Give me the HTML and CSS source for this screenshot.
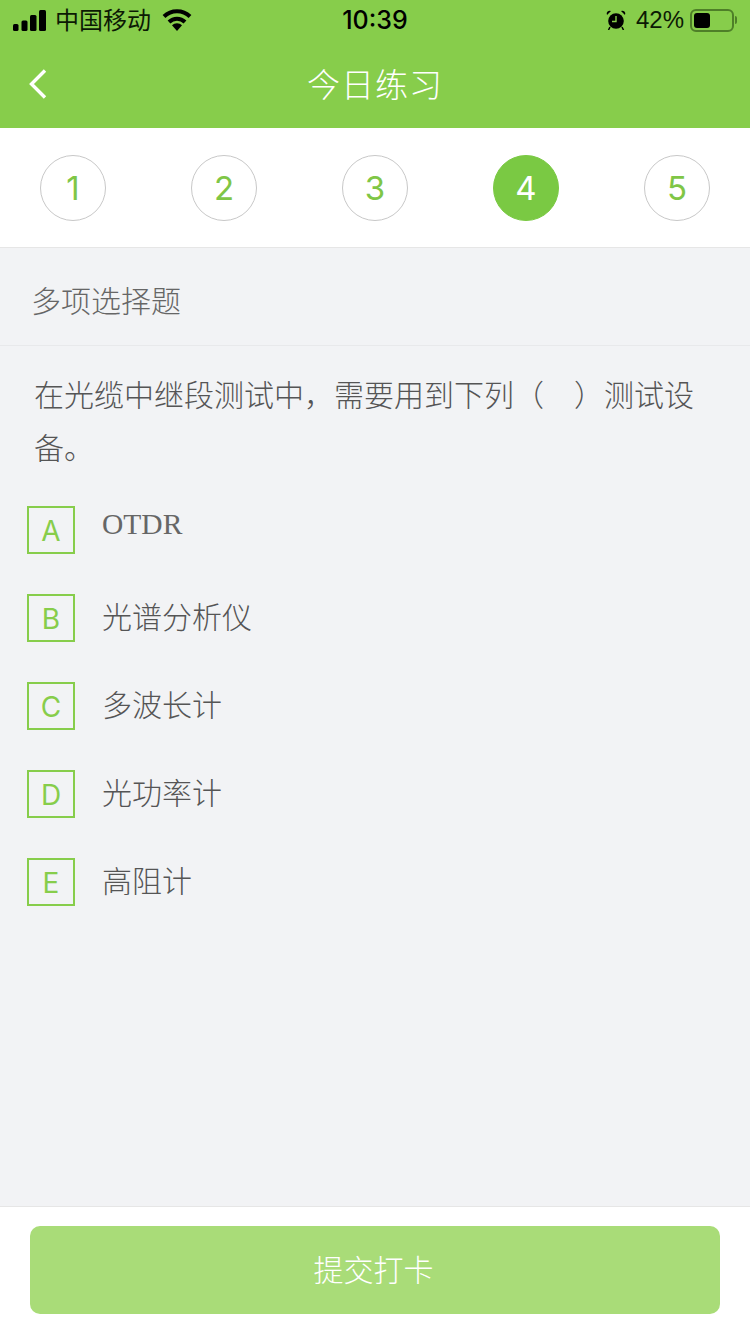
FILE: index.html
```html
<!DOCTYPE html>
<html lang="zh-CN">

<head>
    <meta charset="UTF-8">
    <meta name="viewport" content="width=device-width, initial-scale=1.0">
    <title>今日练习</title>

    <link rel="stylesheet" href="styles.css">
</head>

<body>

    <div id="app">

        <!-- Green header with status bar -->
        <div class="header">
            <div class="status-bar">
                <div class="status-left">
                    <svg class="signal" width="33" height="21" viewBox="0 0 33 21">
                        <rect x="0" y="14" width="5.5" height="7" rx="1.5" fill="#000"/>
                        <rect x="8.5" y="10.5" width="6" height="10.5" rx="1.5" fill="#000"/>
                        <rect x="17" y="5" width="6.5" height="16" rx="1.5" fill="#000"/>
                        <rect x="26" y="0" width="7" height="21" rx="1.5" fill="#000"/>
                    </svg>
                    <span class="carrier">中国移动</span>
                    <svg class="wifi" width="30" height="22" viewBox="0 0 30 22">
                        <path d="M2 7.5 A18.5 18.5 0 0 1 28 7.5" fill="none" stroke="#000" stroke-width="4"/>
                        <path d="M7 13 A11.5 11.5 0 0 1 23 13" fill="none" stroke="#000" stroke-width="4"/>
                        <path d="M15 22 L10 16.3 A7 7 0 0 1 20 16.3 Z" fill="#000"/>
                    </svg>
                </div>
                <span class="clock">10:39</span>
                <div class="status-right">
                    <svg class="alarm" width="20" height="20" viewBox="0 0 20 20">
                        <circle cx="10" cy="11" r="7.8" fill="#000"/>
                        <path d="M1 5 L5 1 A3 3 0 0 0 1 5 Z M19 5 L15 1 A3 3 0 0 1 19 5 Z" fill="#000"/>
                        <path d="M10 6 V11.5 H6" fill="none" stroke="#87cd4b" stroke-width="1.4"/>
                        <path d="M4 17 L2.5 20 M16 17 L17.5 20" stroke="#000" stroke-width="1.5"/>
                    </svg>
                    <span class="battery-pct">42%</span>
                    <div class="battery">
                        <div class="battery-level"></div>
                    </div>
                    <div class="battery-cap"></div>
                </div>
            </div>
            <div class="nav-bar">
                <svg class="back" width="22" height="32" viewBox="0 0 22 32">
                    <path d="M18 2.5 L4.5 16 L18 29.5" fill="none" stroke="#fff" stroke-width="3.4"/>
                </svg>
                <h1>今日练习</h1>
            </div>
        </div>

        <!-- Question numbers -->
        <div class="steps">
            <span class="step">1</span>
            <span class="step">2</span>
            <span class="step">3</span>
            <span class="step active">4</span>
            <span class="step">5</span>
        </div>

        <div class="main">
            <div class="question-type">多项选择题</div>
            <p class="question">在光缆中继段测试中，需要用到下列（　）测试设备。</p>

            <div class="options">
                <div class="option">
                    <span class="letter">A</span>
                    <span class="option-text latin">OTDR</span>
                </div>
                <div class="option">
                    <span class="letter">B</span>
                    <span class="option-text">光谱分析仪</span>
                </div>
                <div class="option">
                    <span class="letter">C</span>
                    <span class="option-text">多波长计</span>
                </div>
                <div class="option">
                    <span class="letter">D</span>
                    <span class="option-text">光功率计</span>
                </div>
                <div class="option">
                    <span class="letter">E</span>
                    <span class="option-text">高阻计</span>
                </div>
            </div>
        </div>

        <div class="footer">
            <button type="button" class="submit-btn">提交打卡</button>
        </div>
    </div>

</body>

</html>
```

FILE: styles.css
```css
* {
    box-sizing: border-box;
}

html,
body {
    margin: 0;
    padding: 0;
}

body {
    font-family: "Liberation Sans", "Noto Sans CJK SC", sans-serif;
    background-color: #f2f3f5;
}

#app {
    display: flex;
    flex-direction: column;
    width: 750px;
    height: 1334px;
    overflow: hidden;
}

.header {
    height: 128px;
    background-color: #87cd4b;
}

.status-bar {
    display: flex;
    justify-content: space-between;
    align-items: center;
    height: 40px;
    padding: 0 13px 0 13px;
    color: #000;
    position: relative;
}

.status-left,
.status-right {
    display: flex;
    align-items: center;
}

.carrier {
    margin-left: 9px;
    margin-top: -3px;
    font-size: 24px;
    color: #0c1a04;
}

.wifi {
    margin-left: 11px;
}

.clock {
    position: absolute;
    left: 0;
    right: 0;
    text-align: center;
    font-family: Inter, sans-serif;
    font-size: 25px;
    font-weight: 500;
}

.battery-pct {
    margin-left: 10px;
    font-size: 24px;
    color: #0c1a04;
}

.battery {
    width: 44px;
    height: 23px;
    margin-left: 6px;
    padding: 2px;
    border: 2px solid #4e7f28;
    border-radius: 6px;
}

.battery-level {
    width: 16px;
    height: 15px;
    background-color: #000;
    border-radius: 3px;
}

.battery-cap {
    width: 2px;
    height: 8px;
    margin-left: 1px;
    background-color: #4e7f28;
    border-radius: 0 2px 2px 0;
}

.nav-bar {
    display: flex;
    justify-content: center;
    align-items: center;
    height: 88px;
    padding-bottom: 2px;
    position: relative;
}

.back {
    position: absolute;
    left: 27px;
    top: 28px;
}

.nav-bar h1 {
    margin: 0;
    font-size: 33px;
    font-weight: 300;
    color: #fff;
    letter-spacing: 1px;
}

.steps {
    display: flex;
    justify-content: space-between;
    align-items: center;
    height: 120px;
    padding: 0 40px 0 40px;
    background-color: #fff;
    border-bottom: 1px solid #e6e6e6;
}

.step {
    display: flex;
    justify-content: center;
    align-items: center;
    width: 66px;
    height: 66px;
    border: 1px solid #c8c8c8;
    border-radius: 50%;
    font-family: Inter, sans-serif;
    font-size: 33px;
    font-weight: 400;
    color: #7fc646;
}

.step.active {
    background-color: #7ac943;
    border-color: #7ac943;
    color: #fff;
}

.main {
    flex: 1;
}

.question-type {
    height: 98px;
    padding: 36px 0 0 31px;
    border-bottom: 1px solid #e8e9eb;
    font-size: 30px;
    font-weight: 300;
    line-height: 36px;
    color: #666;
}

.question {
    margin: 0;
    padding: 23px 30px 0 34px;
    font-size: 30px;
    font-weight: 300;
    line-height: 53px;
    color: #555;
}

.options {
    margin-top: 31px;
    padding-left: 27px;
}

.option {
    display: flex;
    height: 88px;
}

.letter {
    display: flex;
    justify-content: center;
    align-items: center;
    width: 48px;
    height: 48px;
    padding-top: 2px;
    border: 2px solid #87cd4b;
    font-family: Inter, sans-serif;
    font-size: 28px;
    font-weight: 400;
    color: #87cd4b;
}

.option-text {
    margin-left: 27px;
    font-size: 30px;
    font-weight: 300;
    line-height: 48px;
    color: #555;
}

.option-text.latin {
    font-family: "Liberation Serif", serif;
    font-weight: 400;
    font-size: 29.5px;
    line-height: 36px;
    color: #666;
}

.footer {
    height: 128px;
    padding: 19px 30px 0;
    background-color: #fff;
    border-top: 1px solid #e6e6e6;
}

.submit-btn {
    display: block;
    width: 100%;
    height: 88px;
    padding: 0 3px 4px 0;
    background-color: #a9dc78;
    color: #fff;
    border: none;
    border-radius: 10px;
    font-family: inherit;
    font-size: 30px;
    font-weight: 300;
}
```
